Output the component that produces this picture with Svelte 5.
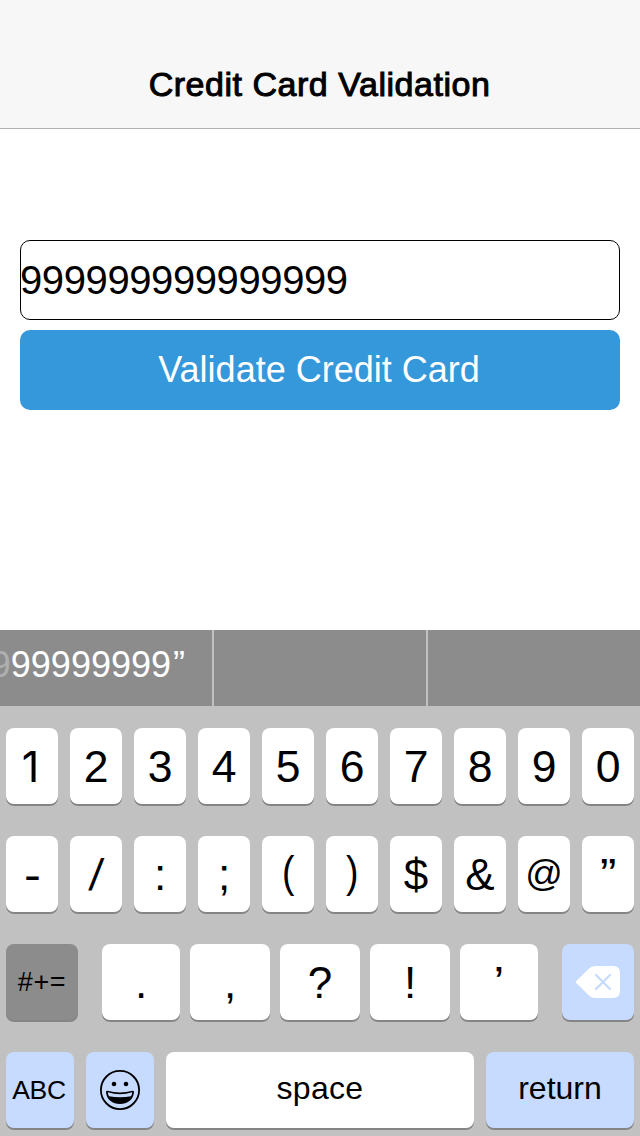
<script>
  const numbers = ['1', '2', '3', '4', '5', '6', '7', '8', '9', '0'];
  const symbols = ['-', '/', ':', ';', '(', ')', '$', '&', '@', '”'];
  const punctuation = ['.', ',', '?', '!', '’'];
  const names = { '1': 'one', '-': 'hyphen', '@': 'at', '”': 'quotes', '’': 'quote', '/': 'slash', '(': 'paren', ')': 'paren' };
  let card = $state('999999999999999');
</script>

<div class="screen">
  <header><h1>Credit Card Validation</h1></header>
  <main>
    <input class="card" bind:value={card} aria-label="Card number" />
    <button class="validate"><span>Validate Credit Card</span></button>
  </main>
  <section class="keyboard">
    <div class="suggestions">
      <div class="suggestion"><span class="faded">9</span><span>99999999</span><span class="close">”</span></div>
      <div class="suggestion"></div>
      <div class="suggestion"></div>
    </div>
    <div class="keys">
      <div class="row ten">
        {#each numbers as n}<button class="key digit"><span class={names[n]}>{n}</span></button>{/each}
      </div>
      <div class="row ten">
        {#each symbols as s}<button class="key symbol"><span class={names[s]}>{s}</span></button>{/each}
      </div>
      <div class="row third">
        <button class="key dark"><span>#+=</span></button>
        <div class="punctuation">
          {#each punctuation as p}<button class="key symbol"><span class={names[p]}>{p}</span></button>{/each}
        </div>
        <button class="key blue" aria-label="Delete">
          <svg width="44" height="32" viewBox="0 0 44 32">
            <path d="M.5 14.7 13 2.5Q15.500 0 19 0H37Q44 0 44 7V25Q44 32 37 32H19Q15.500 32 13 29.500L.5 17.300Q-.7 16 .5 14.700Z" fill="#fff" />
            <path d="m20 9 14 14M34 9 20 23" stroke="#c6dbff" stroke-width="2.300" stroke-linecap="round" />
          </svg>
        </button>
      </div>
      <div class="row fourth">
        <button class="key blue abc"><span>ABC</span></button>
        <button class="key blue" aria-label="Emoji">
          <svg width="40" height="40" viewBox="0 0 40 40">
            <circle cx="20" cy="20" r="19.100" fill="none" stroke="#000" stroke-width="1.800" />
            <circle cx="14" cy="14" r="2.300" />
            <circle cx="26" cy="14" r="2.300" />
            <path d="M7.500 20.800Q20 24.200 32.500 20.800Q34.300 20.500 34 22.500C33 30 27.500 34 20 34S7 30 6 22.500Q5.700 20.500 7.500 20.800Z" />
            <path d="M7.800 22.300Q20 26 32.200 22.300Q32.200 24.500 31 26.300Q20 28.300 9 26.300Q7.800 24.500 7.800 22.300Z" fill="#c6dbff" />
          </svg>
        </button>
        <button class="key space"><span>space</span></button>
        <button class="key blue return"><span>return</span></button>
      </div>
    </div>
  </section>
</div>

<style>
  :global(body) { margin: 0; }
  * { box-sizing: border-box; }
  button, input { font: inherit; color: inherit; border: 0; padding: 0; margin: 0; outline: 0; }
  span { display: block; white-space: nowrap; }
  .screen { width: 640px; height: 1136px; display: flex; flex-direction: column; overflow: hidden; background: #fff; color: #000; font-family: "Liberation Sans", Arial, sans-serif; }
  header { height: 129px; padding: 40px 1px 0 0; background: #f7f7f7; border-bottom: 1px solid #b2b2b2; text-align: center; }
  h1 { margin: 0; font-size: 34px; font-weight: 400; line-height: 88px; letter-spacing: .53px; -webkit-text-stroke: 1px #000; }
  main { flex: 1; padding: 111px 20px 0; display: flex; flex-direction: column; gap: 10px; }
  .card { height: 80px; width: 100%; border: 1px solid #000; border-radius: 10px; background: #fff; font-size: 40px; letter-spacing: -.4px; text-indent: -1px; }
  .validate { height: 80px; padding-right: 2px; border-radius: 10px; background: #3498db; color: #fff; font-size: 36px; }
  .keyboard { height: 506px; background: #c1c1c1; }
  .suggestions { height: 76px; display: grid; grid-template-columns: 212px 212px 1fr; gap: 2px; background: #c1c1c1; }
  .suggestion { background: #8c8c8c; color: #fff; font-size: 36px; line-height: 70px; display: flex; justify-content: flex-end; padding-right: 26px; overflow: hidden; }
  .faded { opacity: .3; }
  .close { padding-left: 2px; letter-spacing: 1px; }
  .keys { padding: 22px 6px 0; display: flex; flex-direction: column; gap: 32px; }
  .row { height: 76px; display: grid; }
  .ten { grid-template-columns: repeat(10, 52px); gap: 12px; }
  .third { grid-template-columns: 72px 436px 72px; gap: 24px; }
  .punctuation { display: grid; grid-template-columns: 78px 80px 80px 80px 78px; gap: 10px; }
  .fourth { grid-template-columns: 68px 68px 308px 148px; gap: 12px; }
  .key { height: 76px; display: flex; align-items: center; justify-content: center; border-radius: 8px; background: #fff; box-shadow: 0 2px 0 #858585; font-size: 44px; line-height: 76px; }
  .digit { padding-top: 2px; font-size: 44.500px; }
  .symbol { padding-top: 2px; }
  .blue { background: #c6dbff; }
  .dark { background: #8c8c8c; font-size: 27px; letter-spacing: .6px; }
  .one { font-family: Inter, sans-serif; font-size: 43px; padding: 0 3px 2px 0; }
  .at { font-size: 37px; padding-bottom: 3px; }
  .slash { transform: skewX(-7deg); }
  .hyphen { transform: scaleX(1.150); }
  .paren { padding-bottom: 6px; transform: scaleX(.85); }
  .quotes { transform: scaleX(1.120); }
  .quote { transform: scaleX(1.100); }
  .abc { font-size: 26.500px; letter-spacing: -.4px; padding-right: 2px; }
  .space, .return { font-size: 32px; padding-bottom: 4px; }
  .space { letter-spacing: .3px; }
</style>
